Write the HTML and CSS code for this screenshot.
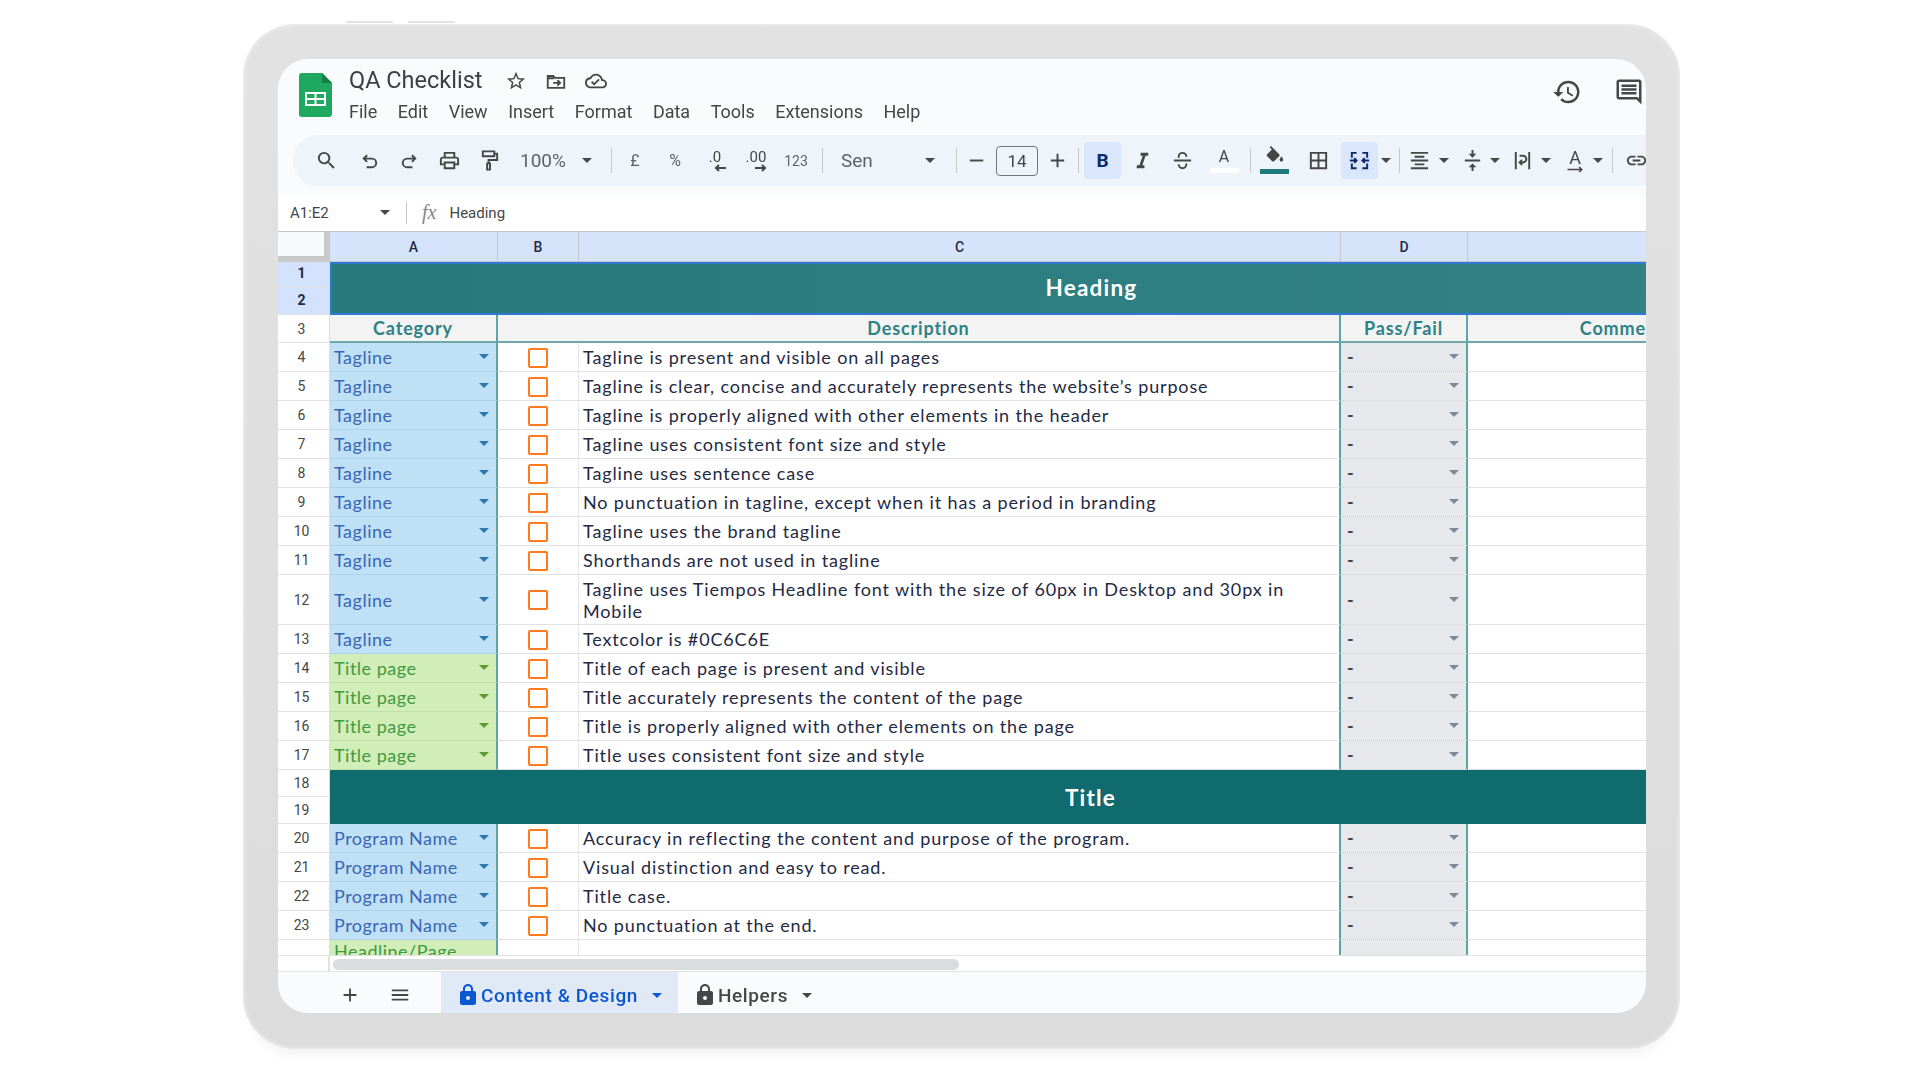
FILE: index.html
```html
<!DOCTYPE html>
<html lang="en">
<head>
    <meta charset="UTF-8">
    <title>QA Checklist</title>
    <link rel="stylesheet" href="styles.css">
</head>
<body>

<div class="tablet">
    <div class="tablet-buttons"><span></span><span></span></div>
    <div class="screen">

        <header class="titlebar">
            <svg class="logo" viewBox="0 0 33 44">
                <path d="M3 0h20l10 10v31a3 3 0 0 1-3 3H3a3 3 0 0 1-3-3V3a3 3 0 0 1 3-3z" fill="#1fa85f"/>
                <path d="M23 0l10 10H23z" fill="#15803f"/>
                <path d="M6 19h21v14H6zm2 2v4h7.5v-4zm9.5 0v4H25v-4zM8 27v4h7.5v-4zm9.5 0v4H25v-4z" fill="#fff" fill-rule="evenodd"/>
            </svg>
            <div class="title-main">
                <div class="title-row">
                    <span class="doc-name">QA Checklist</span>
                    <svg class="doc-icon" viewBox="0 0 24 24"><path d="M22 9.24l-7.19-.62L12 2 9.19 8.63 2 9.24l5.46 4.73L5.82 21 12 17.27 18.18 21l-1.63-7.03L22 9.24zM12 15.4l-3.76 2.27 1-4.28-3.32-2.88 4.38-.38L12 6.1l1.71 4.04 4.38.38-3.32 2.88 1 4.28L12 15.4z"/></svg>
                    <svg class="doc-icon line" viewBox="0 0 24 24"><path d="M3 6.5V19.5h18V8.5H11l-2-2H3z M3 9h7M9 14h7M13.5 11l3 3-3 3"/></svg>
                    <svg class="doc-icon" viewBox="0 0 24 24"><path d="M19.35 10.04C18.67 6.59 15.64 4 12 4 9.11 4 6.6 5.64 5.35 8.04 2.34 8.36 0 10.91 0 14c0 3.31 2.69 6 6 6h13c2.76 0 5-2.24 5-5 0-2.64-2.05-4.78-4.65-4.96zM19 18H6c-2.21 0-4-1.79-4-4 0-2.05 1.53-3.76 3.56-3.97l1.07-.11.5-.95C8.08 7.14 9.94 6 12 6c2.62 0 4.88 1.86 5.39 4.43l.3 1.5 1.53.11c1.56.1 2.78 1.41 2.78 2.96 0 1.65-1.35 3-3 3zm-9-3.82l-2.09-2.09L6.5 13.5 10 17l6.01-6.01-1.41-1.41z"/></svg>
                </div>
                <nav class="menu">
                    <span>File</span><span>Edit</span><span>View</span><span>Insert</span><span>Format</span><span>Data</span><span>Tools</span><span>Extensions</span><span>Help</span>
                </nav>
            </div>
            <div class="title-right">
                <svg viewBox="0 0 24 24"><path d="M13 3a9 9 0 0 0-9 9H1l3.89 3.89.07.14L9 12H6c0-3.87 3.13-7 7-7s7 3.13 7 7-3.13 7-7 7c-1.93 0-3.68-.79-4.94-2.06l-1.42 1.42A8.954 8.954 0 0 0 13 21a9 9 0 0 0 0-18zm-1 5v5l4.28 2.54.72-1.21-3.5-2.08V8H12z"/></svg>
                <svg viewBox="0 0 24 24"><path d="M21.99 4c0-1.1-.89-2-1.99-2H4c-1.1 0-2 .9-2 2v12c0 1.1.9 2 2 2h14l4 4-.01-18zM20 4v13.17L18.83 16H4V4h16zM6 12h12v2H6zm0-3h12v2H6zm0-3h12v2H6z"/></svg>
            </div>
        </header>

        <div class="toolbar">
            <div class="tool"><svg viewBox="0 0 24 24"><path d="M15.5 14h-.79l-.28-.27A6.471 6.471 0 0 0 16 9.5 6.5 6.5 0 1 0 9.5 16c1.61 0 3.09-.59 4.23-1.57l.27.28v.79l5 4.99L20.49 19l-4.99-5zm-6 0C7.01 14 5 11.99 5 9.5S7.01 5 9.5 5 14 7.01 14 9.5 11.99 14 9.5 14z"/></svg></div>
            <div class="tool m3"><svg class="line" viewBox="0 0 24 24"><path d="M9.5 6.5L6 10l3.5 3.5M6 10h8.5a4.5 4.5 0 0 1 0 9H9"/></svg></div>
            <div class="tool"><svg class="line" viewBox="0 0 24 24"><path d="M14.5 6.5L18 10l-3.5 3.5M18 10H9.5a4.5 4.5 0 0 0 0 9H15"/></svg></div>
            <div class="tool"><svg viewBox="0 0 24 24"><path d="M19 8h-1V3H6v5H5c-1.66 0-3 1.34-3 3v6h4v4h12v-4h4v-6c0-1.66-1.34-3-3-3zM8 5h8v3H8V5zm8 12v2H8v-4h8v2zm2-2v-2H6v2H4v-4c0-.55.45-1 1-1h14c.55 0 1 .45 1 1v4h-2z"/></svg></div>
            <div class="tool"><svg class="line" viewBox="0 0 24 24"><path d="M5 2.5h12v5H5zM17 5h3v6.5h-9V15M9.5 15h3v6.5h-3z"/></svg></div>
            <div class="zoom-box"><span>100%</span><i class="drop"></i></div>
            <div class="sep m10"></div>
            <div class="tool m3 txt">£</div>
            <div class="tool txt">%</div>
            <div class="tool txt stack"><span>.0</span><svg class="line" viewBox="0 0 14 8"><path d="M13 4H3M6 1L3 4l3 3"/></svg></div>
            <div class="tool txt stack m1"><span>.00</span><svg class="line" viewBox="0 0 14 8"><path d="M1 4h10M8 1l3 3-3 3"/></svg></div>
            <div class="tool txt small">123</div>
            <div class="sep m6"></div>
            <div class="font-box"><span>Sen</span><i class="drop"></i></div>
            <div class="sep m12"></div>
            <div class="tool-s"><svg viewBox="0 0 24 24"><path d="M5 11h14v2H5z"/></svg></div>
            <div class="size-box">14</div>
            <div class="tool-s"><svg viewBox="0 0 24 24"><path d="M19 13h-6v6h-2v-6H5v-2h6V5h2v6h6v2z"/></svg></div>
            <div class="sep m2"></div>
            <div class="tool-on m5"><b>B</b></div>
            <div class="tool m1"><svg viewBox="0 0 24 24"><path d="M10 4v3h2.21l-3.42 10H6v3h8v-3h-2.21l3.42-10H18V4z"/></svg></div>
            <div class="tool"><svg class="line" viewBox="0 0 24 24"><path d="M3 12h18M8 9V8a4 4 0 0 1 8 0M16 15v1a4 4 0 0 1-8 0"/></svg></div>
            <div class="tool m2 text-color"><span>A</span><i></i></div>
            <div class="sep m6"></div>
            <div class="fill-tool"><svg viewBox="0 0 24 24"><path d="M16.56 8.94L7.62 0 6.21 1.41l2.38 2.38-5.15 5.15c-.59.59-.59 1.54 0 2.12l5.5 5.5c.29.29.68.44 1.06.44s.77-.15 1.06-.44l5.5-5.5c.59-.58.59-1.53 0-2.12zM19 11.5s-2 2.17-2 3.5c0 1.1.9 2 2 2s2-.9 2-2c0-1.33-2-3.5-2-3.5z"/></svg><i></i></div>
            <div class="tool"><svg viewBox="0 0 24 24"><path d="M3 3v18h18V3H3zm8 16H5v-6h6v6zm0-8H5V5h6v6zm8 8h-6v-6h6v6zm0-8h-6V5h6v6z"/></svg></div>
            <div class="tool-on m3"><svg class="line navy" viewBox="0 0 24 24"><path d="M4 9V4h5M20 9V4h-5M4 15v5h5M20 15v5h-5M2 12h7M6.5 9.5L9 12l-2.5 2.5M22 12h-7M17.5 9.5L15 12l2.5 2.5"/></svg></div>
            <div class="caret m3"><i class="drop"></i></div>
            <div class="sep m8"></div>
            <div class="tool-m w39"><svg viewBox="0 0 24 24"><path d="M3 21h18v-2H3v2zm4-4h10v-2H7v2zm-4-4h18v-2H3v2zm4-4h10V7H7v2zM3 3v2h18V3H3z"/></svg></div>
            <div class="caret"><i class="drop"></i></div>
            <div class="tool-m m5"><svg viewBox="0 0 24 24"><path d="M8 19h3v4h2v-4h3l-4-4-4 4zm8-14h-3V1h-2v4H8l4 4 4-4zM4 11v2h16v-2H4z"/></svg></div>
            <div class="caret"><i class="drop"></i></div>
            <div class="tool-m m4"><svg class="line" viewBox="0 0 24 24"><path d="M5 3v18M19 3v18M9 7h3.5a3.5 3.5 0 0 1 0 7H9M11.5 11.5L9 14l2.5 2.5"/></svg></div>
            <div class="caret m1"><i class="drop"></i></div>
            <div class="tool-m m6 rotate-a"><span>A</span><svg class="line" viewBox="0 0 24 8"><path d="M3 4h17M17 1l3 3-3 3"/></svg></div>
            <div class="caret"><i class="drop"></i></div>
            <div class="sep m9"></div>
            <div class="tool m3"><svg viewBox="0 0 24 24"><path d="M3.9 12c0-1.71 1.39-3.1 3.1-3.1h4V7H7c-2.76 0-5 2.24-5 5s2.24 5 5 5h4v-1.9H7c-1.71 0-3.1-1.39-3.1-3.1zM8 13h8v-2H8v2zm9-6h-4v1.9h4c1.71 0 3.1 1.39 3.1 3.1s-1.39 3.1-3.1 3.1h-4V17h4c2.76 0 5-2.24 5-5s-2.24-5-5-5z"/></svg></div>
        </div>

        <div class="formula-bar">
            <div class="name-box"><span>A1:E2</span><i class="drop"></i></div>
            <div class="sep-f"></div>
            <span class="fx">fx</span>
            <span class="formula">Heading</span>
        </div>

        <div class="grid-wrap">
            <table class="sheet">
                <colgroup>
                    <col class="c-row"><col class="c-a"><col class="c-b"><col class="c-c"><col class="c-d"><col class="c-e"><col class="c-f">
                </colgroup>
                <tr class="r-head">
                    <th class="corner"></th><th>A</th><th>B</th><th>C</th><th>D</th><th></th><th></th>
                </tr>
                <tr class="r-band"><td class="rn active">1</td><td class="band heading" colspan="6" rowspan="2">Heading</td></tr>
                <tr class="r-band"><td class="rn active">2</td></tr>
                <tr class="r-sub">
                    <td class="rn">3</td>
                    <td class="sub bar">Category</td>
                    <td class="sub bar" colspan="2">Description</td>
                    <td class="sub bar">Pass/Fail</td>
                    <td class="sub">Comments</td>
                    <td class="sub"></td>
                </tr>

                <tr><td class="rn">4</td><td class="cat blue"><div>Tagline<i class="drop"></i></div></td><td class="chk"><span></span></td><td class="desc">Tagline is present and visible on all pages</td><td class="pf"><div>-<i class="drop"></i></div></td><td colspan="2"></td></tr>
                <tr><td class="rn">5</td><td class="cat blue"><div>Tagline<i class="drop"></i></div></td><td class="chk"><span></span></td><td class="desc">Tagline is clear, concise and accurately represents the website’s purpose</td><td class="pf"><div>-<i class="drop"></i></div></td><td colspan="2"></td></tr>
                <tr><td class="rn">6</td><td class="cat blue"><div>Tagline<i class="drop"></i></div></td><td class="chk"><span></span></td><td class="desc">Tagline is properly aligned with other elements in the header</td><td class="pf"><div>-<i class="drop"></i></div></td><td colspan="2"></td></tr>
                <tr><td class="rn">7</td><td class="cat blue"><div>Tagline<i class="drop"></i></div></td><td class="chk"><span></span></td><td class="desc">Tagline uses consistent font size and style</td><td class="pf"><div>-<i class="drop"></i></div></td><td colspan="2"></td></tr>
                <tr><td class="rn">8</td><td class="cat blue"><div>Tagline<i class="drop"></i></div></td><td class="chk"><span></span></td><td class="desc">Tagline uses sentence case</td><td class="pf"><div>-<i class="drop"></i></div></td><td colspan="2"></td></tr>
                <tr><td class="rn">9</td><td class="cat blue"><div>Tagline<i class="drop"></i></div></td><td class="chk"><span></span></td><td class="desc">No punctuation in tagline, except when it has a period in branding</td><td class="pf"><div>-<i class="drop"></i></div></td><td colspan="2"></td></tr>
                <tr><td class="rn">10</td><td class="cat blue"><div>Tagline<i class="drop"></i></div></td><td class="chk"><span></span></td><td class="desc">Tagline uses the brand tagline</td><td class="pf"><div>-<i class="drop"></i></div></td><td colspan="2"></td></tr>
                <tr><td class="rn">11</td><td class="cat blue"><div>Tagline<i class="drop"></i></div></td><td class="chk"><span></span></td><td class="desc">Shorthands are not used in tagline</td><td class="pf"><div>-<i class="drop"></i></div></td><td colspan="2"></td></tr>
                <tr class="r-tall"><td class="rn">12</td><td class="cat blue"><div>Tagline<i class="drop"></i></div></td><td class="chk"><span></span></td><td class="desc">Tagline uses Tiempos Headline font with the size of 60px in Desktop and 30px in<br>Mobile</td><td class="pf"><div>-<i class="drop"></i></div></td><td colspan="2"></td></tr>
                <tr><td class="rn">13</td><td class="cat blue"><div>Tagline<i class="drop"></i></div></td><td class="chk"><span></span></td><td class="desc">Textcolor is #0C6C6E</td><td class="pf"><div>-<i class="drop"></i></div></td><td colspan="2"></td></tr>
                <tr><td class="rn">14</td><td class="cat green"><div>Title page<i class="drop"></i></div></td><td class="chk"><span></span></td><td class="desc">Title of each page is present and visible</td><td class="pf"><div>-<i class="drop"></i></div></td><td colspan="2"></td></tr>
                <tr><td class="rn">15</td><td class="cat green"><div>Title page<i class="drop"></i></div></td><td class="chk"><span></span></td><td class="desc">Title accurately represents the content of the page</td><td class="pf"><div>-<i class="drop"></i></div></td><td colspan="2"></td></tr>
                <tr><td class="rn">16</td><td class="cat green"><div>Title page<i class="drop"></i></div></td><td class="chk"><span></span></td><td class="desc">Title is properly aligned with other elements on the page</td><td class="pf"><div>-<i class="drop"></i></div></td><td colspan="2"></td></tr>
                <tr><td class="rn">17</td><td class="cat green"><div>Title page<i class="drop"></i></div></td><td class="chk"><span></span></td><td class="desc">Title uses consistent font size and style</td><td class="pf"><div>-<i class="drop"></i></div></td><td colspan="2"></td></tr>

                <tr class="r-title"><td class="rn">18</td><td class="band title" colspan="6" rowspan="2">Title</td></tr>
                <tr class="r-title"><td class="rn">19</td></tr>

                <tr><td class="rn">20</td><td class="cat blue"><div>Program Name<i class="drop"></i></div></td><td class="chk"><span></span></td><td class="desc">Accuracy in reflecting the content and purpose of the program.</td><td class="pf"><div>-<i class="drop"></i></div></td><td colspan="2"></td></tr>
                <tr><td class="rn">21</td><td class="cat blue"><div>Program Name<i class="drop"></i></div></td><td class="chk"><span></span></td><td class="desc">Visual distinction and easy to read.</td><td class="pf"><div>-<i class="drop"></i></div></td><td colspan="2"></td></tr>
                <tr><td class="rn">22</td><td class="cat blue"><div>Program Name<i class="drop"></i></div></td><td class="chk"><span></span></td><td class="desc">Title case.</td><td class="pf"><div>-<i class="drop"></i></div></td><td colspan="2"></td></tr>
                <tr><td class="rn">23</td><td class="cat blue"><div>Program Name<i class="drop"></i></div></td><td class="chk"><span></span></td><td class="desc">No punctuation at the end.</td><td class="pf"><div>-<i class="drop"></i></div></td><td colspan="2"></td></tr>
                <tr class="r-tall"><td class="rn"></td><td class="cat green top"><div>Headline/Page</div></td><td class="chk"><span></span></td><td class="desc"></td><td class="pf"></td><td colspan="2"></td></tr>
            </table>
        </div>

        <div class="scroll-row">
            <div class="scroll-corner"></div>
            <div class="scroll-thumb"></div>
        </div>

        <footer class="tabs">
            <svg class="tab-icon" viewBox="0 0 24 24"><path d="M19 13h-6v6h-2v-6H5v-2h6V5h2v6h6v2z"/></svg>
            <svg class="tab-icon" viewBox="0 0 24 24"><path d="M3 18h18v-2H3v2zm0-5h18v-2H3v2zm0-7v2h18V6H3z"/></svg>
            <div class="tab current">
                <svg viewBox="0 0 24 24"><path d="M18 8h-1V6c0-2.76-2.24-5-5-5S7 3.24 7 6v2H6c-1.1 0-2 .9-2 2v10c0 1.1.9 2 2 2h12c1.1 0 2-.9 2-2V10c0-1.1-.9-2-2-2zm-6 9c-1.1 0-2-.9-2-2s.9-2 2-2 2 .9 2 2-.9 2-2 2zM9 8V6c0-1.66 1.34-3 3-3s3 1.34 3 3v2H9z"/></svg>
                <span>Content &amp; Design</span><i class="drop"></i>
            </div>
            <div class="tab">
                <svg viewBox="0 0 24 24"><path d="M18 8h-1V6c0-2.76-2.24-5-5-5S7 3.24 7 6v2H6c-1.1 0-2 .9-2 2v10c0 1.1.9 2 2 2h12c1.1 0 2-.9 2-2V10c0-1.1-.9-2-2-2zm-6 9c-1.1 0-2-.9-2-2s.9-2 2-2 2 .9 2 2-.9 2-2 2zM9 8V6c0-1.66 1.34-3 3-3s3 1.34 3 3v2H9z"/></svg>
                <span>Helpers</span><i class="drop"></i>
            </div>
        </footer>

    </div>
</div>

</body>
</html>
```

FILE: styles.css
```css
* {
    box-sizing: border-box;
}

body {
    margin: 0;
    height: 1080px;
    overflow: hidden;
    background-color: #fff;
    font-family: "Roboto", sans-serif;
    color: #444746;
    padding: 24px 0 0 243px;
}

svg {
    display: block;
    fill: #444746;
}

svg.line {
    fill: none;
    stroke: #444746;
    stroke-width: 2;
}

/* small triangle used by every dropdown */
.drop {
    display: block;
    flex: none;
    width: 0;
    height: 0;
    border-left: 5px solid transparent;
    border-right: 5px solid transparent;
    border-top: 5px solid #444746;
}

/* tablet frame */
.tablet {
    position: relative;
    width: 1437px;
    height: 1025px;
    padding: 35px 34px 36px 35px;
    border-radius: 52px;
    background: linear-gradient(#e2e2e2, #dcdcdc);
    box-shadow: 0 14px 12px -8px rgba(0, 0, 0, 0.05), inset 0 0 5px rgba(255, 255, 255, 0.7);
}

.tablet-buttons {
    position: absolute;
    top: -3px;
    left: 103px;
    display: flex;
    gap: 15px;
}

.tablet-buttons span {
    width: 47px;
    height: 2px;
    background-color: #e3e3e3;
}

.screen {
    display: flex;
    flex-direction: column;
    height: 954px;
    overflow: hidden;
    border-radius: 30px;
    background-color: #f9fbfd;
    filter: blur(0.35px);
}

/* title bar */
.titlebar {
    display: flex;
    height: 76px;
    flex: none;
    padding: 14px 0 0 21px;
}

.logo {
    width: 33px;
    height: 44px;
}

.title-main {
    margin-left: 17px;
}

.title-row {
    display: flex;
    align-items: center;
    height: 20px;
    margin-top: -3px;
}

.doc-name {
    width: 156px;
    font-size: 23.5px;
    color: #3c4043;
    white-space: nowrap;
}

.doc-icon {
    width: 22px;
    height: 22px;
    margin-right: 18px;
    margin-top: 2px;
}

.menu {
    display: flex;
    gap: 20.5px;
    margin-top: 11px;
    font-size: 18px;
}

.title-right {
    display: flex;
    gap: 32px;
    margin-left: auto;
    margin-right: 2px;
    padding-top: 4px;
}

.title-right svg {
    width: 30px;
    height: 30px;
}

/* toolbar */
.toolbar {
    display: flex;
    align-items: center;
    flex: none;
    width: 1400px;
    height: 51px;
    margin-left: 15px;
    margin-bottom: 10px;
    padding-left: 13px;
    border-radius: 25px 0 0 25px;
    background-color: #eff3fa;
}

.tool,
.tool-s,
.tool-m,
.tool-on,
.caret {
    display: flex;
    align-items: center;
    justify-content: center;
    flex: none;
    height: 37px;
}

.tool { width: 40px; }
.tool-s { width: 38px; }
.tool-m { width: 36px; }
.tool-m.w39 { width: 39px; }
.caret { width: 10px; }

.tool svg,
.tool-s svg,
.tool-m svg,
.tool-on svg {
    width: 23px;
    height: 23px;
}

.tool-on {
    width: 37px;
    border-radius: 4px;
    background-color: #d9e6fb;
    font-size: 19px;
    color: #0b2a6b;
}

svg.line.navy {
    stroke: #0b2a6b;
}

.txt {
    font-size: 16px;
    color: #5f6368;
}

.txt.small {
    font-size: 14px;
}

.stack {
    flex-direction: column;
    line-height: 14px;
    color: #444746;
    font-size: 15px;
}

.stack svg {
    width: 14px;
    height: 8px;
    margin-left: 10px;
}

.zoom-box {
    display: flex;
    align-items: center;
    width: 92px;
    padding-left: 11px;
    font-size: 19px;
    color: #5f6368;
}

.zoom-box .drop {
    margin-left: 16px;
}

.font-box {
    display: flex;
    align-items: center;
    justify-content: space-between;
    width: 121px;
    padding: 0 9px 0 18px;
    font-size: 19px;
    color: #5f6368;
}

.size-box {
    width: 42px;
    height: 30px;
    flex: none;
    margin-left: 1px;
    border: 1px solid #747775;
    border-radius: 4px;
    font-size: 17px;
    line-height: 28px;
    text-align: center;
}

.sep {
    flex: none;
    width: 1px;
    height: 25px;
    background-color: #c7c7c7;
}

.m1 { margin-left: 1px; }
.m2 { margin-left: 2px; }
.m3 { margin-left: 3px; }
.m4 { margin-left: 4px; }
.m5 { margin-left: 5px; }
.m6 { margin-left: 6px; }
.m8 { margin-left: 8px; }
.m9 { margin-left: 9px; }
.m10 { margin-left: 10px; }
.m12 { margin-left: 12px; }

.text-color {
    flex-direction: column;
    font-size: 16px;
    line-height: 18px;
}

.text-color i {
    display: block;
    width: 29px;
    height: 5px;
    background-color: #fff;
    margin-top: 2px;
}

.fill-tool {
    display: flex;
    flex-direction: column;
    align-items: center;
    flex: none;
    width: 47px;
}

.fill-tool svg {
    width: 22px;
    height: 22px;
    margin-top: -2px;
}

.fill-tool i {
    display: block;
    width: 29px;
    height: 5px;
    margin-top: 1px;
    background-color: #1f7a7c;
}

.rotate-a {
    flex-direction: column;
    font-size: 18px;
    line-height: 17px;
}

.tool-m.rotate-a svg {
    width: 20px;
    height: 7px;
}

/* formula bar */
.formula-bar {
    display: flex;
    align-items: center;
    flex: none;
    height: 35px;
    padding: 0 0 2px 12px;
    background-color: #fff;
    font-size: 15px;
}

.name-box {
    display: flex;
    align-items: center;
    justify-content: space-between;
    width: 100px;
}

.sep-f {
    width: 1px;
    height: 22px;
    margin-left: 16px;
    background-color: #c7c7c7;
}

.fx {
    margin-left: 15px;
    font-family: "Liberation Serif", serif;
    font-style: italic;
    font-size: 20px;
    color: #80868b;
}

.formula {
    margin-left: 13px;
}

/* sheet */
.grid-wrap {
    flex: none;
    height: 724px;
    overflow: hidden;
    border-top: 1px solid #c7c7c7;
    background-color: #fff;
}

.sheet {
    width: 1573px;
    table-layout: fixed;
    border-collapse: separate;
    border-spacing: 0;
    font-family: "Lato", sans-serif;
    font-size: 18px;
    letter-spacing: 0.85px;
    color: #1f2a44;
}

.c-row { width: 52px; }
.c-a { width: 168px; }
.c-b { width: 81px; }
.c-c { width: 762px; }
.c-d { width: 127px; }
.c-e { width: 317px; }
.c-f { width: 66px; }

.sheet tr { height: 29px; }
.sheet tr.r-head { height: 30px; }
.sheet tr.r-band { height: 26px; }
.sheet tr.r-band + .r-band { height: 27px; }
.sheet tr.r-sub { height: 28px; }
.sheet tr.r-tall { height: 50px; }
.sheet tr.r-title { height: 27px; }

.sheet td,
.sheet th {
    padding: 0;
    border-bottom: 1px solid #e1e3e3;
    overflow: hidden;
    white-space: nowrap;
}

.r-head th {
    border-right: 1px solid #c7c7c7;
    border-bottom: 1px solid #c7c7c7;
    background-color: #d6e4fb;
    font-family: "Roboto", sans-serif;
    font-size: 14px;
    font-weight: 500;
    letter-spacing: 0;
    color: #1f2a44;
}

.r-head th.corner {
    background-color: #f8f9fa;
    border-right: 6px solid #c9c9c9;
    border-bottom: 6px solid #c9c9c9;
}

.sheet td.rn {
    padding-right: 4px;
    border-right: 1px solid #dadce0;
    background-color: #fff;
    font-family: "Roboto", sans-serif;
    font-size: 14px;
    letter-spacing: 0;
    color: #444746;
    text-align: center;
}

.sheet td.rn.active {
    padding-bottom: 3px;
    background-color: #d3e3fd;
    font-weight: 700;
    color: #1f2a44;
}

.band {
    font-size: 22.5px;
    font-weight: 700;
    letter-spacing: 1.2px;
    color: #fff;
    text-align: center;
}

.sheet td.heading {
    padding-bottom: 2px;
    border: 2px solid #2f78d8;
    border-right: 0;
    background: linear-gradient(90deg, #267a7b, #348387);
}

.sheet td.title {
    border-bottom: 0;
    background-color: #0f6b6d;
}

.sub {
    background-color: #f3f3f3;
    font-weight: 700;
    color: #2e8285;
    text-align: center;
}

.sheet td.sub {
    border-bottom: 2px solid #6fa8a9;
}

.sheet td.sub.bar {
    border-right: 2px solid #5ea3a5;
}

.cat div,
.pf div {
    display: flex;
    align-items: center;
    justify-content: space-between;
    padding-right: 7px;
}

.sheet td.cat {
    padding-left: 4px;
    border-right: 2px solid #5ea3a5;
    letter-spacing: 0.5px;
}

.cat.blue {
    background-color: #bfe0f5;
    color: #3b66b6;
}

.sheet td.cat.blue {
    border-bottom-color: #aed2e9;
}

.cat.blue .drop {
    border-top-color: #2a78ad;
}

.cat.green {
    background-color: #d1edb8;
    color: #3f9a3f;
}

.sheet td.cat.green {
    border-bottom-color: #c3e0a9;
}

.cat.green .drop {
    border-top-color: #5a9a2e;
}

.cat .drop,
.pf .drop {
    margin-top: -1px;
}

.cat.top {
    vertical-align: top;
}

.chk {
    border-right: 1px solid #e4e6e6;
}

.chk span {
    display: block;
    width: 20px;
    height: 20px;
    margin: 1px auto 0;
    border: 2.5px solid #ff7a1f;
    border-radius: 2px;
}

.sheet td.desc {
    padding-left: 4px;
    border-right: 2px solid #5ea3a5;
    line-height: 22px;
}

.sheet td.pf {
    padding-left: 6px;
    border-right: 2px solid #5ea3a5;
    border-bottom: 1px dotted #cfd1d6;
    background-color: #e7e8eb;
    font-weight: 700;
    color: #444746;
}

.pf .drop {
    border-top-color: #82869a;
}

/* scrollbar and tabs */
.scroll-row {
    display: flex;
    flex: none;
    height: 17px;
    padding: 3px 0 2px 0;
    background-color: #fff;
    border-top: 1px solid #e1e3e3;
    border-bottom: 1px solid #e1e3e3;
}

.scroll-corner {
    width: 52px;
    margin: -3px 0 -2px;
    border-right: 2px solid #e1e3e3;
}

.scroll-thumb {
    width: 626px;
    height: 11px;
    margin-left: 3px;
    border-radius: 6px;
    background-color: #dadce0;
}

.tabs {
    display: flex;
    align-items: center;
    flex: 1;
    font-size: 19px;
    letter-spacing: 0.6px;
}

.tab-icon {
    width: 22px;
    height: 22px;
    margin-left: 61px;
    margin-top: 5px;
}

.tab-icon + .tab-icon {
    margin-left: 28px;
}

.tab {
    display: flex;
    align-items: center;
    height: 100%;
    padding: 5px 0 0 15px;
    font-weight: 500;
    color: #444746;
}

.tab svg {
    width: 24px;
    height: 24px;
    margin-right: 1px;
}

.tab .drop {
    margin-left: 14px;
}

.tab.current {
    width: 237px;
    margin-left: 30px;
    background-color: #e1e9f7;
    color: #0b57d0;
}

.tab.current svg {
    fill: #0b57d0;
}

.tab.current .drop {
    border-top-color: #0b57d0;
}
```
